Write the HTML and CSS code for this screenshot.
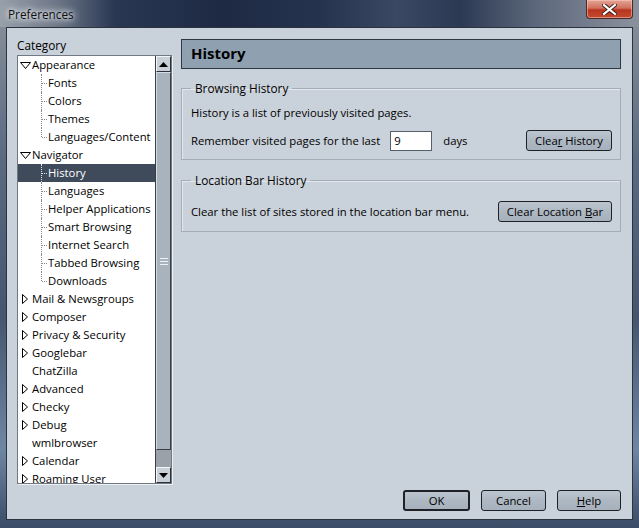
FILE: index.html
```html
<!DOCTYPE html>
<html lang="en">
<head>
    <meta charset="UTF-8">
    <title>Preferences</title>
    <link rel="stylesheet" href="styles.css">
</head>
<body>
    <div class="window">
        <div class="titlebar">
            <span class="title">Preferences</span>
            <div class="close-btn">
                <svg width="15" height="11" viewBox="0 0 15 11">
                    <path d="M2 1 L13 10 M13 1 L2 10" stroke="#3a1a14" stroke-width="4" stroke-linecap="square"/>
                    <path d="M2 1 L13 10 M13 1 L2 10" stroke="#fff" stroke-width="2.2" stroke-linecap="square"/>
                </svg>
            </div>
        </div>

        <div class="client">
            <div class="main">
                <div class="sidebar">
                    <div class="category-label">Category</div>
                    <div class="tree">
                        <ul class="tree-rows">
                            <li class="node"><svg class="twisty-open" width="11" height="7"><polygon points="0.5,0.5 10.5,0.5 5.5,6.5" fill="#fff" stroke="#000"/></svg>Appearance</li>
                            <li class="child">Fonts</li>
                            <li class="child">Colors</li>
                            <li class="child">Themes</li>
                            <li class="child last">Languages/Content</li>
                            <li class="node"><svg class="twisty-open" width="11" height="7"><polygon points="0.5,0.5 10.5,0.5 5.5,6.5" fill="#fff" stroke="#000"/></svg>Navigator</li>
                            <li class="child selected">History</li>
                            <li class="child">Languages</li>
                            <li class="child">Helper Applications</li>
                            <li class="child">Smart Browsing</li>
                            <li class="child">Internet Search</li>
                            <li class="child">Tabbed Browsing</li>
                            <li class="child last">Downloads</li>
                            <li class="node"><svg class="twisty-closed" width="6" height="10"><polygon points="0.5,0.5 5.5,5 0.5,9.5" fill="#fff" stroke="#000"/></svg>Mail &amp; Newsgroups</li>
                            <li class="node"><svg class="twisty-closed" width="6" height="10"><polygon points="0.5,0.5 5.5,5 0.5,9.5" fill="#fff" stroke="#000"/></svg>Composer</li>
                            <li class="node"><svg class="twisty-closed" width="6" height="10"><polygon points="0.5,0.5 5.5,5 0.5,9.5" fill="#fff" stroke="#000"/></svg>Privacy &amp; Security</li>
                            <li class="node"><svg class="twisty-closed" width="6" height="10"><polygon points="0.5,0.5 5.5,5 0.5,9.5" fill="#fff" stroke="#000"/></svg>Googlebar</li>
                            <li class="node leaf">ChatZilla</li>
                            <li class="node"><svg class="twisty-closed" width="6" height="10"><polygon points="0.5,0.5 5.5,5 0.5,9.5" fill="#fff" stroke="#000"/></svg>Advanced</li>
                            <li class="node"><svg class="twisty-closed" width="6" height="10"><polygon points="0.5,0.5 5.5,5 0.5,9.5" fill="#fff" stroke="#000"/></svg>Checky</li>
                            <li class="node"><svg class="twisty-closed" width="6" height="10"><polygon points="0.5,0.5 5.5,5 0.5,9.5" fill="#fff" stroke="#000"/></svg>Debug</li>
                            <li class="node leaf">wmlbrowser</li>
                            <li class="node"><svg class="twisty-closed" width="6" height="10"><polygon points="0.5,0.5 5.5,5 0.5,9.5" fill="#fff" stroke="#000"/></svg>Calendar</li>
                            <li class="node"><svg class="twisty-closed" width="6" height="10"><polygon points="0.5,0.5 5.5,5 0.5,9.5" fill="#fff" stroke="#000"/></svg>Roaming User</li>
                        </ul>
                        <div class="scrollbar">
                            <div class="scroll-btn">
                                <svg width="9" height="5"><polygon points="4.5,0 9,5 0,5" fill="#000"/></svg>
                            </div>
                            <div class="scroll-thumb">
                                <span class="grip"></span>
                            </div>
                            <div class="scroll-track"></div>
                            <div class="scroll-btn">
                                <svg width="9" height="5"><polygon points="0,0 9,0 4.5,5" fill="#000"/></svg>
                            </div>
                        </div>
                    </div>
                </div>

                <div class="panel">
                    <div class="panel-header">History</div>

                    <fieldset class="group group-browsing">
                        <legend>Browsing History</legend>
                        <p class="group-text">History is a list of previously visited pages.</p>
                        <div class="group-row">
                            <span>Remember visited pages for the last</span>
                            <input type="text" class="days-input" value="9">
                            <span class="days-label">days</span>
                            <button class="btn btn-clear-history">Clea<u>r</u> History</button>
                        </div>
                    </fieldset>

                    <fieldset class="group group-location">
                        <legend>Location Bar History</legend>
                        <div class="group-row">
                            <span>Clear the list of sites stored in the location bar menu.</span>
                            <button class="btn btn-clear-location">Clear Location <u>B</u>ar</button>
                        </div>
                    </fieldset>
                </div>
            </div>

            <div class="dialog-buttons">
                <button class="btn btn-ok">OK</button>
                <button class="btn btn-cancel">Cancel</button>
                <button class="btn btn-help"><u>H</u>elp</button>
            </div>
        </div>
    </div>
</body>
</html>
```

FILE: styles.css
```css
body {
    margin: 0;
    padding: 0;
    font-family: 'Segoe UI', 'Open Sans', sans-serif;
    font-size: 11.3px;
    color: #000;
}
.window {
    width: 639px;
    height: 528px;
    overflow: hidden;
    background: linear-gradient(180deg, #8b939e 0%, #5b6a80 30%, #46566f 60%, #6f86a3 85%, #3a4c66 100%);
}
.titlebar {
    height: 27px;
    display: flex;
    align-items: flex-start;
    justify-content: space-between;
    background: linear-gradient(90deg, #98a0aa 0%, #6c7687 9%, #2a3752 18%, #1e2a44 35%, #26334e 50%, #3b4864 62%, #2c3953 72%, #5d687c 84%, #8b929e 100%);
}
.title {
    margin: 6px 0 0 8px;
    font-size: 11.8px;
    line-height: 16px;
    color: #101010;
    text-shadow: 0 0 8px #dfe3e8, 0 0 8px #dfe3e8, 0 0 4px #eef1f4;
}
.close-btn {
    width: 45px;
    height: 18px;
    margin-right: 6px;
    border: 1px solid #4a2a28;
    border-top: none;
    border-radius: 0 0 4px 4px;
    background: linear-gradient(180deg, #e3a597 0%, #d0705c 45%, #b8351f 55%, #c24a2e 100%);
    box-shadow: inset 0 0 0 1px rgba(255, 210, 200, 0.5);
    display: flex;
    align-items: center;
    justify-content: center;
}
.client {
    margin-left: 6px;
    width: 627px;
    height: 493px;
    box-sizing: border-box;
    border: 1px solid #2b3340;
    background-color: #c9d1da;
    padding: 11px 11px 8px 10px;
    display: flex;
    flex-direction: column;
}
.main {
    display: flex;
    height: 445px;
    gap: 9px;
}
.sidebar {
    width: 155px;
    display: flex;
    flex-direction: column;
}
.category-label {
    height: 16px;
    line-height: 12px;
    font-size: 11.8px;
}
.tree {
    height: 429px;
    border: 1px solid #6f7883;
    box-shadow: 1px 1px 0 #eef1f4;
    box-sizing: border-box;
    background-color: #fff;
    display: flex;
}
.tree-rows {
    list-style: none;
    margin: 0;
    padding: 0;
    width: 137px;
    height: 427px;
    overflow: hidden;
}
.tree-rows li {
    position: relative;
    height: 18px;
    line-height: 18px;
    white-space: nowrap;
    display: flex;
    align-items: center;
}
.node {
    padding-left: 2px;
}
.twisty-open {
    margin-right: 1px;
}
.twisty-closed {
    margin-left: 2px;
    margin-right: 4px;
}
.leaf {
    padding-left: 14px;
}
.child {
    padding-left: 30px;
}
.child::before {
    content: "";
    position: absolute;
    left: 23px;
    top: 0;
    bottom: 0;
    border-left: 1px dotted #8a8a8a;
}
.child.last::before {
    bottom: 9px;
}
.child::after {
    content: "";
    position: absolute;
    left: 24px;
    top: 9px;
    width: 5px;
    border-top: 1px dotted #8a8a8a;
}
.child.selected {
    background-color: #3f4a5b;
    color: #fff;
}
.child.selected::before,
.child.selected::after {
    border-color: #e0e4ea;
}
.scrollbar {
    width: 16px;
    height: 427px;
    display: flex;
    flex-direction: column;
    border-left: 1px solid #3a3f46;
    box-sizing: border-box;
    background-color: #9ba1a8;
}
.scroll-btn {
    height: 16px;
    box-sizing: border-box;
    background-color: #c8d0d8;
    border: 1px solid;
    border-color: #f4f6f8 #2e3238 #2e3238 #f4f6f8;
    display: flex;
    align-items: center;
    justify-content: center;
}
.scroll-thumb {
    height: 378px;
    box-sizing: border-box;
    background-color: #a9b3bd;
    border: 1px solid;
    border-color: #d6dce2 #3a3f46 #3a3f46 #d6dce2;
    display: flex;
    align-items: center;
    justify-content: center;
}
.grip {
    width: 8px;
    height: 5px;
    border-top: 1px solid #eef1f4;
    border-bottom: 1px solid #eef1f4;
    background: linear-gradient(#eef1f4, #eef1f4) center / 8px 1px no-repeat;
}
.scroll-track {
    height: 17px;
}
.panel {
    width: 440px;
    display: flex;
    flex-direction: column;
}
.panel-header {
    height: 30px;
    box-sizing: border-box;
    border: 1px solid #2e3845;
    background-color: #8fa0b1;
    padding-left: 9px;
    font-size: 15px;
    font-weight: bold;
    line-height: 27px;
}
.group {
    margin: 11px 0 0 0;
    border: 1px solid #a4adb7;
    box-shadow: inset 1px 1px 0 #e4e8ec;
    padding: 9px 8px 8px 9px;
    min-width: 0;
}
.group legend {
    padding: 0 4px;
    height: 16px;
    line-height: 16px;
    font-size: 11.8px;
}
.group-location {
    margin-top: 12px;
    padding-top: 13px;
    padding-bottom: 9px;
}
.group-text {
    margin: 0 0 9px 0;
    height: 16px;
    line-height: 16px;
}
.group-row {
    display: flex;
    align-items: center;
    height: 21px;
}
.days-input {
    width: 42px;
    height: 20px;
    box-sizing: border-box;
    margin: 0 0 0 10px;
    border: 1px solid #56606b;
    padding: 0 3px;
    font-family: inherit;
    font-size: 11.3px;
    background-color: #fff;
}
.days-label {
    margin-left: 11px;
}
.btn {
    height: 21px;
    box-sizing: border-box;
    border: 1px solid #1e2126;
    border-radius: 3px;
    background: linear-gradient(180deg, #bcc5cf 0%, #aeb8c3 50%, #a6b1bd 100%);
    font-family: inherit;
    font-size: 11.3px;
    color: #000;
    padding: 0;
    margin-left: auto;
}
.btn-clear-history {
    width: 86px;
}
.btn-clear-location {
    width: 114px;
}
.dialog-buttons {
    margin-top: 6px;
    display: flex;
    justify-content: flex-end;
    gap: 11px;
}
.dialog-buttons .btn {
    margin-left: 0;
}
.btn-ok {
    width: 67px;
    border-width: 2px;
}
.btn-cancel {
    width: 65px;
}
.btn-help {
    width: 64px;
}
```
